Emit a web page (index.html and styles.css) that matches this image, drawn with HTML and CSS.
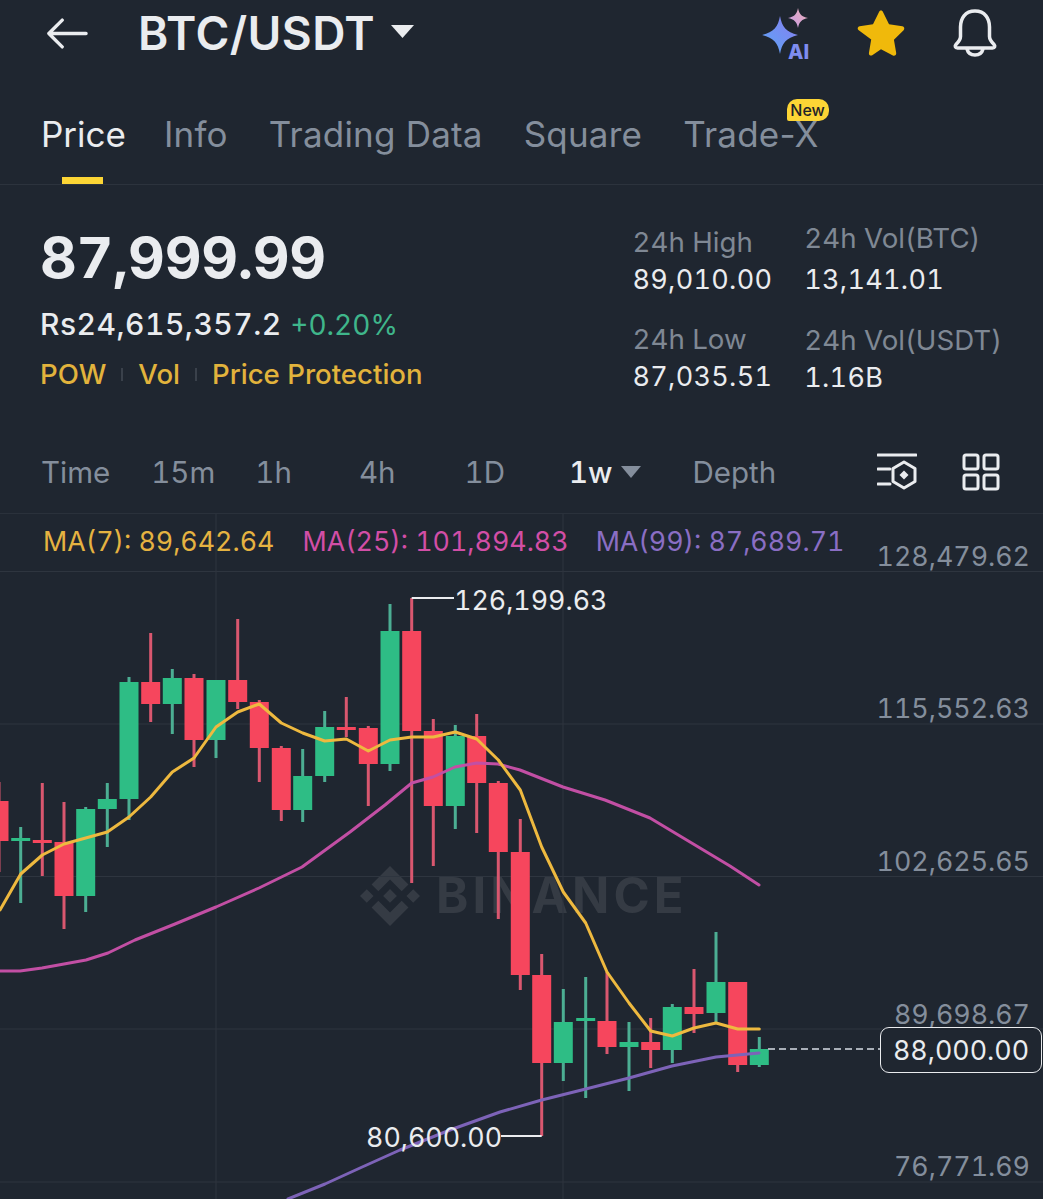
FILE: index.html
```html
<!DOCTYPE html>
<html lang="en">
<head>
<meta charset="utf-8">
<title>BTC/USDT</title>
<link rel="stylesheet" href="styles.css">
</head>
<body>
<main class="screen">
  <header class="topbar">
    <svg class="back" viewBox="0 0 44 32"><path d="M42 16H3M17 2 3 16l14 14"/></svg>
    <h1 class="pair">BTC/USDT</h1>
    <svg class="caret" viewBox="0 0 25 15"><path d="M1 1h23L12.500 14z"/></svg>
    <div class="top-actions">
      <svg class="ai" viewBox="0 0 50 50">
        <defs>
          <linearGradient id="sparkA" x1="0" y1="1" x2="1" y2="0"><stop offset="0" stop-color="#5aa6f5"/><stop offset="1" stop-color="#8a7cf0"/></linearGradient>
          <linearGradient id="sparkB" x1="0" y1="1" x2="1" y2="0"><stop offset="0" stop-color="#c49ae6"/><stop offset="1" stop-color="#eeb0b8"/></linearGradient>
        </defs>
        <path fill="url(#sparkA)" d="M19 8c2 11 6 16 18 19-12 3-16 8-18 19-2-11-6-16-18-19C13 24 17 19 19 8z"/>
        <path fill="url(#sparkB)" d="M37 0c1 6 4 9 10 10-6 1-9 4-10 10-1-6-4-9-10-10 6-1 9-4 10-10z"/>
        <text class="ai-text" x="27" y="51">AI</text>
      </svg>
      <svg class="star" viewBox="0 0 48 46"><path d="M24 1.500c1 0 1.600.6 2 1.500l5.700 11.700 12.800 1.900c1.800.3 2.500 2.400 1.200 3.700l-9.300 9.100 2.200 12.800c.3 1.800-1.600 3.200-3.200 2.300L24 38.500l-8.400 5.900c-1.600.9-3.500-.5-3.200-2.300l2.200-12.800-12.300-9.100c-1.300-1.300-.6-3.400 1.200-3.700l12.800-1.900L22 3c.4-.9 1-1.500 2-1.500z"/></svg>
      <svg class="bell" viewBox="0 0 46 48"><path d="M23 2C13 2 8.500 9.500 8.500 18v9.500c0 3-1.500 5-4.500 8-1.300 1.400-1 3.500 1.500 3.500h35c2.500 0 2.800-2.100 1.500-3.500-3-3-4.500-5-4.500-8V18C37.500 9.500 33 2 23 2zM15 40c1 3.800 4 6 8 6s7-2.200 8-6"/></svg>
    </div>
  </header>

  <nav class="tabs">
    <a class="tab active">Price</a>
    <a class="tab">Info</a>
    <a class="tab">Trading Data</a>
    <a class="tab">Square</a>
    <a class="tab tab-new">Trade-X<span class="badge">New</span></a>
  </nav>

  <section class="stats">
    <div class="summary">
      <div class="last">87,999.99</div>
      <div class="fiat">Rs24,615,357.2 <span class="change">+0.20%</span></div>
      <div class="tags"><span>POW</span><i></i><span>Vol</span><i></i><span>Price Protection</span></div>
    </div>
    <div class="metrics">
      <div class="metric-col">
        <div class="metric"><span class="m-label">24h High</span><span class="m-value">89,010.00</span></div>
        <div class="metric"><span class="m-label">24h Low</span><span class="m-value">87,035.51</span></div>
      </div>
      <div class="metric-col col-b">
        <div class="metric first"><span class="m-label">24h Vol(BTC)</span><span class="m-value">13,141.01</span></div>
        <div class="metric low"><span class="m-label">24h Vol(USDT)</span><span class="m-value">1.16B</span></div>
      </div>
    </div>
  </section>

  <div class="timebar">
    <span class="tf t1">Time</span>
    <span class="tf t2">15m</span>
    <span class="tf t3">1h</span>
    <span class="tf t4">4h</span>
    <span class="tf t5">1D</span>
    <span class="tf t6 on">1w</span>
    <svg class="tf-caret" viewBox="0 0 20 12"><path d="M0 0h20L10 12z"/></svg>
    <span class="tf t7">Depth</span>
    <svg class="tool" viewBox="0 0 40 38"><path d="M1 2h38M1 16h12M1 31h12"/><path d="M27 9l11 6.500v13L27 35l-11-6.500v-13z"/><path class="tool-dot" d="M27 17.500l4.500 4.500-4.500 4.500-4.500-4.500z"/></svg>
    <svg class="layout" viewBox="0 0 38 38"><rect x="2" y="2" width="14" height="14" rx="2"/><rect x="22" y="2" width="14" height="14" rx="2"/><rect x="2" y="22" width="14" height="14" rx="2"/><rect x="22" y="22" width="14" height="14" rx="2"/></svg>
  </div>

  <section class="chart">
    <div class="watermark">
      <svg class="wm-logo" viewBox="0 0 126.610 126.610"><path d="M38.730 53.200l24.590-24.580 24.600 24.600 14.300-14.310L63.320 0 24.420 38.900zM0 63.310l14.300-14.310 14.310 14.310-14.310 14.300zM38.730 73.410l24.590 24.590 24.600-24.600 14.310 14.290-38.900 38.910-38.910-38.880zM98 63.310l14.300-14.310 14.310 14.300-14.310 14.320zM77.830 63.300L63.320 48.780 52.590 59.510l-1.240 1.230-2.540 2.540 14.510 14.500 14.510-14.470z"/></svg>
      <span class="wm-text">BINANCE</span>
    </div>
    <svg class="plot" viewBox="0 514 1043 685">
      <path class="grid" d="M0 571.500H1043M0 724H1043M0 876.500H1043M0 1029H1043M0 1182H1043M216 514V1199M563 514V1199"/>
      <path class="wick-red" d="M-1 782V872M42.300 783V876M64 802V929M150.700 633V722M194 674V767M237.700 619V709M259.300 700V782M281.300 746V821M346.300 697V737M368.300 726V806M411.700 598V883M433.300 719V866M476.700 714V833M498.300 781V919M520.300 819V990M541.700 954V1136M607 972V1054M650.700 1018V1068M694 969V1033M737.700 982V1072"/>
      <path class="wick-green" d="M20.700 827V903M85.700 807V912M107.300 783V847M129 677V820M172.300 669V734M216 680V758M302.700 749V822M324.700 711V782M390 604V771M455.300 725V829M563.300 989V1081M585.700 977V1098M629 1022V1091M672.300 1004V1063M716 932V1023M759.300 1037V1067"/>
      <path class="body-red" d="M-1 801V841M42.300 840V843M64 842V896M150.700 682V704M194 678V740M237.700 680V702M259.300 702V748M281.300 748V810M346.300 727V730M368.300 728V764M411.700 631V731M433.300 731V806M476.700 736V783M498.300 783V852M520.300 852V975M541.700 975V1063M607 1021V1047M650.700 1042V1050M694 1007V1014M737.700 982V1065"/>
      <path class="body-green" d="M20.700 838V841M85.700 809V896M107.300 799V809M129 682V799M172.300 678V704M216 680V740M302.700 776V810M324.700 727V776M390 631V764M455.300 736V806M563.300 1022V1063M585.700 1018V1021M629 1042V1047M672.300 1007V1050M716 982V1013M759.300 1049V1065"/>
      <polyline class="ma25" points="0,971 20,971 42,968 64,964 86,960 108,953 135,940 175,924 216,907 259,888 302,867 350,832 385,805 411.700,783 433,777 455,767 476.700,763 498,764 520,770 563,787 605,800 650,818 700,848 730,866 759,885"/>
      <polyline class="ma99" points="288,1199 325,1184 360,1168 400,1150 450,1130 500,1112 541.700,1100 585.700,1089 629,1078 672,1066 716,1057 759,1053"/>
      <polyline class="ma7" points="0,910 20.700,874 42.300,855 64,844 85.700,838 107.300,832 129,817 150.700,797 172.300,772 194,758 216,727 237.700,712 259.300,704 281.300,723 302.700,733 324.700,741 346.300,739 368.300,751 390,740 411.700,737 433.300,737 455.300,732 476.700,739 498.300,760 520.300,790 541.700,847 563.300,892 585.700,923 607,972 629,1003 650.700,1031 672.300,1036 694,1028 716,1023 737.700,1029 759.300,1029"/>
      <path class="last-line" d="M768 1049H880"/>
      <path class="mark-line" d="M411.700 598H454M501 1136H541.700"/>
    </svg>
    <div class="legend">
      <span class="ma-y">MA(7): 89,642.64</span>
      <span class="ma-p">MA(25): 101,894.83</span>
      <span class="ma-v">MA(99): 87,689.71</span>
    </div>
    <span class="axis a1">128,479.62</span>
    <span class="axis a2">115,552.63</span>
    <span class="axis a3">102,625.65</span>
    <span class="axis a4">89,698.67</span>
    <span class="axis a5">76,771.69</span>
    <span class="price-tag">88,000.00</span>
    <span class="mark m-high">126,199.63</span>
    <span class="mark m-low">80,600.00</span>
  </section>
</main>
</body>
</html>
```
FILE: styles.css
```css
* { box-sizing: border-box; }
html, body { margin: 0; padding: 0; background: #1f2630; }
body { width: 1043px; height: 1199px; overflow: hidden; font-family: Inter, "Liberation Sans", sans-serif; color: #eaecef; font-variant-numeric: tabular-nums; }
.screen { display: flex; flex-direction: column; height: 1199px; }

.topbar { display: flex; align-items: center; height: 66px; padding-left: 46px; flex: none; }
.back { width: 42px; height: 31px; fill: none; stroke: #eaecef; stroke-width: 3.500; stroke-linecap: round; stroke-linejoin: round; }
.pair { margin: 0 0 0 50px; font-size: 46px; font-weight: 600; letter-spacing: .4px; line-height: 1; }
.caret { width: 25px; height: 15px; margin-left: 15px; margin-top: -3px; fill: #eaecef; }
.top-actions { margin-left: auto; display: flex; align-items: center; }
.ai { width: 50px; height: 50px; margin-right: 45px; overflow: visible; }
.ai-text { font-size: 20px; font-weight: 800; fill: #7f8df0; }
.star { width: 50px; height: 48px; margin-right: 46px; fill: #f0b90b; }
.bell { width: 46px; height: 48px; margin-right: 45px; fill: none; stroke: #eaecef; stroke-width: 3.500; stroke-linejoin: round; }

.tabs { display: flex; gap: 41px; height: 119px; padding: 42px 0 0 41px; border-bottom: 1px solid #2c333d; flex: none; position: relative; }
.tab { position: relative; font-size: 35px; line-height: 52px; color: #848e9c; height: 76px; font-variant-numeric: normal; letter-spacing: .2px; }
.tab.active { color: #eaecef; margin-right: -3px; letter-spacing: 0; }
.tab.active::after { content: ""; position: absolute; left: 21px; bottom: 0; width: 41px; height: 7px; background: #fcd535; }
.badge { position: absolute; right: -10px; top: -9px; width: 42px; height: 22px; background: #fcd535; border-radius: 10px 10px 10px 2px; color: #1e2329; font-size: 16px; line-height: 22px; text-align: center; font-weight: 500; letter-spacing: 0; }

.stats { display: flex; justify-content: space-between; height: 245px; padding: 41px 0 0 40px; flex: none; }
.last { font-size: 57px; font-weight: 700; line-height: 64px; letter-spacing: -.3px; }
.fiat { margin-top: 16px; font-size: 30px; font-weight: 500; line-height: 36px; letter-spacing: .5px; }
.change { color: #3fb68b; font-weight: 400; font-size: 28px; letter-spacing: 0; }
.tags { display: flex; align-items: center; margin-top: 14px; font-size: 27.600px; line-height: 34px; color: #e2b33c; font-weight: 500; }
.tags i { width: 2px; height: 13px; background: #3a414b; margin: 0 15px; }
.metrics { display: flex; gap: 32px; padding-right: 41px; margin-top: -2px; }
.metric-col { display: flex; flex-direction: column; gap: 23px; }
.col-b { margin-top: -4px; }
.metric { display: flex; flex-direction: column; gap: 2px; }
.metric.first { gap: 6px; }
.metric.low { margin-top: 1px; }
.m-label { font-size: 27.700px; line-height: 36px; color: #7f8894; }
.m-value { font-size: 27px; line-height: 36px; color: #eaecef; letter-spacing: .3px; }

.timebar { position: relative; height: 84px; display: flex; align-items: center; flex: none; border-bottom: 1px solid #2a313b; padding-left: 41px; }
.tf { font-size: 29.500px; color: #848e9c; }
.tf.on { color: #eaecef; font-weight: 500; }
.t2 { margin-left: 41px; }
.t3 { margin-left: 40px; }
.t4 { margin-left: 67px; }
.t5 { margin-left: 69px; }
.t6 { margin-left: 64px; }
.tf-caret { width: 20px; height: 12px; margin-left: 8px; fill: #848e9c; }
.t7 { margin-left: 52px; }
.tool { width: 40px; height: 38px; margin-left: auto; fill: none; stroke: #eaecef; stroke-width: 3; stroke-linecap: round; stroke-linejoin: round; }
.tool-dot { fill: #eaecef; stroke: none; }
.layout { width: 38px; height: 38px; margin: 0 43px 0 45px; fill: none; stroke: #eaecef; stroke-width: 3; }

.chart { position: relative; flex: 1; overflow: hidden; }
.plot { position: absolute; inset: 0; width: 1043px; height: 685px; overflow: hidden; }
.grid { stroke: #2e353f; stroke-width: 1; fill: none; }
.wick-red { stroke: #d9576f; stroke-width: 3; fill: none; }
.wick-green { stroke: #4cae93; stroke-width: 3; fill: none; }
.body-red { stroke: #f6465d; stroke-width: 19; fill: none; }
.body-green { stroke: #2ebd85; stroke-width: 19; fill: none; }
.ma7, .ma25, .ma99 { fill: none; stroke-width: 3; stroke-linejoin: round; stroke-linecap: round; }
.ma7 { stroke: #eeb93f; }
.ma25 { stroke: #c24fa4; }
.ma99 { stroke: #7d63b8; }
.last-line { stroke: #a9afb8; stroke-width: 2; stroke-dasharray: 7 4; fill: none; }
.mark-line { stroke: #eaecef; stroke-width: 2; fill: none; }

.watermark { position: absolute; left: 360px; top: 350px; display: flex; align-items: center; gap: 16px; color: #353b44; }
.wm-logo { width: 60px; height: 60px; fill: #353b44; }
.wm-text { font-size: 49px; font-weight: 700; letter-spacing: 4px; line-height: 64px; }

.legend { position: relative; display: flex; padding: 10px 0 0 43px; font-size: 26.800px; line-height: 34px; white-space: nowrap; }
.ma-y { color: #e5b341; }
.ma-p { color: #d24ea6; margin-left: 28px; }
.ma-v { color: #8a6ec4; margin-left: 27px; }

.axis { position: absolute; right: 13px; font-size: 26.800px; line-height: 32px; color: #848e9c; }
.a1 { top: 26px; }
.a2 { top: 178px; }
.a3 { top: 331px; }
.a4 { top: 484px; }
.a5 { top: 636px; }
.price-tag { position: absolute; left: 880px; top: 513px; width: 162px; height: 46px; border: 1.500px solid #eaecef; border-radius: 9px; background: #1f2630; font-size: 26.800px; line-height: 44px; text-align: center; color: #eaecef; }
.mark { position: absolute; font-size: 26.800px; line-height: 34px; color: #eaecef; }
.m-high { left: 454px; top: 69px; }
.m-low { left: 366px; top: 606px; }
```
